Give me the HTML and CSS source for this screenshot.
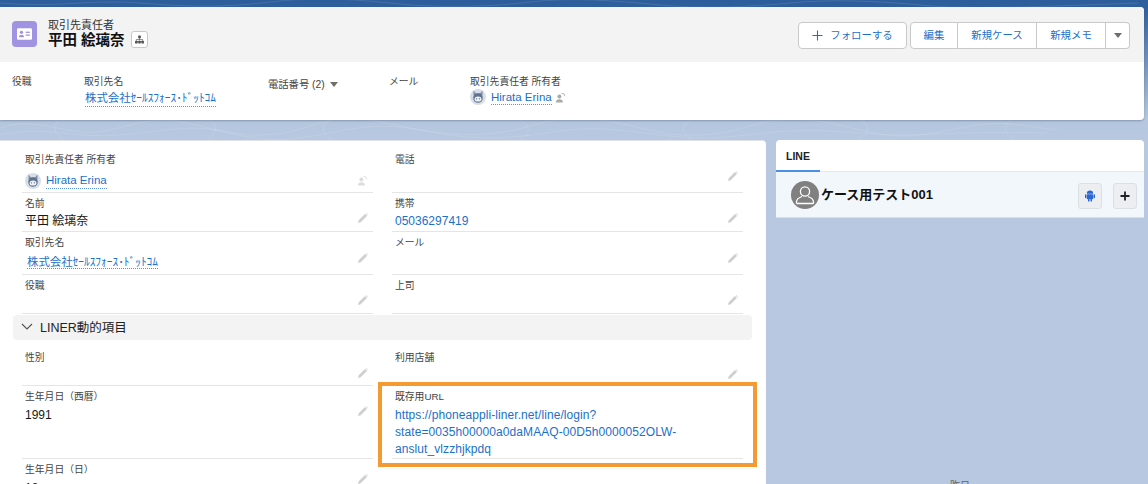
FILE: index.html
```html
<!DOCTYPE html>
<html lang="ja">
<head>
<meta charset="utf-8">
<title>取引先責任者</title>
<link rel="stylesheet" href="styles.css">
</head>
<body>
<svg class="topo" width="1148" height="484" viewBox="0 0 1148 484" aria-hidden="true">
  <g fill="none" stroke="#fff" stroke-opacity=".16" stroke-width=".7">
    <path d="M0 128c40-14 70 12 110 2s50-14 90-4 70 14 110 0 60-6 100 2 80 10 120-2 70-8 110 2 70 10 110-2 70-6 110 4 60 6 100-2 50-4 98 2"/>
    <path d="M0 135c50-10 70 4 120 0s70-12 110-2 60 8 110-2 70-2 110 4 70 2 110-4 80 2 120 6 70-4 110-6 80 4 110 4 70-4 148-2"/>
    <path d="M60 120c-8 6-6 14 4 20M210 120c10 8 4 14-2 20M330 120c-10 6-8 14 2 20M520 120c12 6 10 14 0 20M690 120c-12 8-6 14 2 20M860 120c12 6 8 14-2 20M1010 120c-8 8-4 14 4 20"/>
    <path d="M0 3c60 5 90-4 140 0s80 5 130-1 90-2 130 2 90 3 130-2 90-1 130 3 90 2 130-2 90-2 130 2 90 3 218-2"/>
  </g>
</svg>
<main class="page">
  <header class="record">
    <div class="highlights">
      <div class="identity">
        <span class="entity-icon">
          <svg width="18" height="14" viewBox="0 0 18 14"><rect width="18" height="14" rx="1.6" fill="#fff"/><circle cx="5.4" cy="5" r="2" fill="#9f93e2"/><path d="M2.4 11c0-2.2 1.2-3 3-3s3 .8 3 3z" fill="#9f93e2"/><rect x="10.4" y="4.2" width="5" height="1.5" fill="#9f93e2"/><rect x="10.4" y="7.6" width="5" height="1.5" fill="#9f93e2"/></svg>
        </span>
        <div class="titles">
          <div class="object-name">取引先責任者</div>
          <div class="record-name">平田 絵璃奈</div>
        </div>
        <span class="hier-btn">
          <svg width="10" height="10" viewBox="0 0 10 10"><g fill="#555"><rect x="3.500" y="0.500" width="3" height="3" rx=".5"/><rect x="0" y="6.500" width="3" height="3" rx=".5"/><rect x="7" y="6.500" width="3" height="3" rx=".5"/><rect x="3.500" y="6.500" width="3" height="3" rx=".5"/></g><path d="M5 3v3M1.500 6.500V5h7v1.500" fill="none" stroke="#555" stroke-width=".7"/></svg>
        </span>
      </div>
      <div class="actions">
        <button class="btn follow"><svg width="11" height="11" viewBox="0 0 12 12"><path d="M6 .5v11M.5 6h11" stroke="#1b70c9" stroke-width="1.200"/></svg>フォローする</button>
        <div class="btn-group">
          <button class="btn seg edit">編集</button>
          <button class="btn seg case">新規ケース</button>
          <button class="btn seg memo">新規メモ</button>
          <button class="btn seg more"><span class="caret"></span></button>
        </div>
      </div>
    </div>
    <div class="summary">
      <div class="sum s1"><div class="sum-label">役職</div></div>
      <div class="sum s2"><div class="sum-label">取引先名</div><a class="link dotted">株式会社ｾｰﾙｽﾌｫｰｽ･ﾄﾞｯﾄｺﾑ</a></div>
      <div class="sum s3"><div class="sum-label phone">電話番号 (2)<span class="caret"></span></div></div>
      <div class="sum s4"><div class="sum-label">メール</div></div>
      <div class="sum s5"><div class="sum-label">取引先責任者 所有者</div>
        <div class="owner">
          <svg class="avatar" width="16" height="16" viewBox="0 0 16 16"><circle cx="8" cy="8" r="8" fill="#d8dee8"/><path d="M3.500 1.500l2.500 3h4l2.500-3v5h-9z" fill="#7d90a8"/><circle cx="8" cy="9" r="4.800" fill="#5f7390"/><ellipse cx="8" cy="10" rx="3.500" ry="2.600" fill="#eef1f5"/><circle cx="6.600" cy="9.800" r=".6" fill="#4a5a70"/><circle cx="9.400" cy="9.800" r=".6" fill="#4a5a70"/></svg>
          <a class="link dotted">Hirata Erina</a>
          <svg class="change" viewBox="0 0 10 10"><circle cx="4" cy="4" r="1.800" fill="#aaa"/><path d="M0.800 9.500c0-2.300 1.300-3 3.200-3s3.200.7 3.200 3z" fill="#aaa"/><path d="M6 1.200a2.800 2.800 0 0 1 3 2.600" fill="none" stroke="#aaa" stroke-width=".8"/></svg>
        </div>
      </div>
    </div>
  </header>

  <div class="columns">
    <section class="detail">
      <div class="grid top-grid">
        <div class="field h42 p11"><div class="label">取引先責任者 所有者</div>
          <div class="value owner owner-row">
            <svg class="avatar" width="16" height="16" viewBox="0 0 16 16"><circle cx="8" cy="8" r="8" fill="#d8dee8"/><path d="M3.500 1.500l2.500 3h4l2.500-3v5h-9z" fill="#7d90a8"/><circle cx="8" cy="9" r="4.800" fill="#5f7390"/><ellipse cx="8" cy="10" rx="3.500" ry="2.600" fill="#eef1f5"/><circle cx="6.600" cy="9.800" r=".6" fill="#4a5a70"/><circle cx="9.400" cy="9.800" r=".6" fill="#4a5a70"/></svg>
            <a class="link dotted">Hirata Erina</a>
          </div>
          <svg class="pencil faint" viewBox="0 0 10 10"><circle cx="4" cy="4" r="1.800" fill="#ddd"/><path d="M0.800 9.500c0-2.300 1.300-3 3.200-3s3.200.7 3.200 3z" fill="#ddd"/><path d="M6 1.200a2.800 2.800 0 0 1 3 2.600" fill="none" stroke="#ddd" stroke-width=".8"/></svg>
        </div>
        <div class="field h42 p11"><div class="label">電話</div><svg class="pencil" viewBox="0 0 10 10"><path d="M0 10l.7-2.700L7 1l2 2-6.300 6.300zM7.600.4l.5-.4 1.900 1.900-.4.500z"/></svg></div>
        <div class="field h39 p8"><div class="label">名前</div><div class="value v1">平田 絵璃奈</div><svg class="pencil" viewBox="0 0 10 10"><path d="M0 10l.7-2.700L7 1l2 2-6.300 6.300zM7.600.4l.5-.4 1.900 1.900-.4.500z"/></svg></div>
        <div class="field h39 p8"><div class="label">携帯</div><div class="value v1"><a class="link">05036297419</a></div><svg class="pencil" viewBox="0 0 10 10"><path d="M0 10l.7-2.700L7 1l2 2-6.300 6.300zM7.600.4l.5-.4 1.900 1.900-.4.500z"/></svg></div>
        <div class="field h43 p11"><div class="label">取引先名</div><div class="value acct"><a class="link dotted">株式会社ｾｰﾙｽﾌｫｰｽ･ﾄﾞｯﾄｺﾑ</a></div><svg class="pencil" viewBox="0 0 10 10"><path d="M0 10l.7-2.700L7 1l2 2-6.300 6.300zM7.600.4l.5-.4 1.900 1.900-.4.500z"/></svg></div>
        <div class="field h43 p11"><div class="label">メール</div><svg class="pencil" viewBox="0 0 10 10"><path d="M0 10l.7-2.700L7 1l2 2-6.300 6.300zM7.600.4l.5-.4 1.900 1.900-.4.500z"/></svg></div>
        <div class="field h39 p8"><div class="label">役職</div><svg class="pencil" viewBox="0 0 10 10"><path d="M0 10l.7-2.700L7 1l2 2-6.300 6.300zM7.600.4l.5-.4 1.900 1.900-.4.500z"/></svg></div>
        <div class="field h39 p8"><div class="label">上司</div><svg class="pencil" viewBox="0 0 10 10"><path d="M0 10l.7-2.700L7 1l2 2-6.300 6.300zM7.600.4l.5-.4 1.900 1.900-.4.500z"/></svg></div>
      </div>
      <div class="section-head">
        <svg width="12" height="7" viewBox="0 0 12 7"><path d="M1 1l5 5 5-5" fill="none" stroke="#555" stroke-width="1.100"/></svg>
        <span>LINER動的項目</span>
      </div>
      <div class="grid lower-grid">
        <div class="field h46 first p7"><div class="label">性別</div><svg class="pencil" viewBox="0 0 10 10"><path d="M0 10l.7-2.700L7 1l2 2-6.300 6.300zM7.600.4l.5-.4 1.900 1.900-.4.500z"/></svg></div>
        <div class="field h46 first p7 noline"><div class="label">利用店舗</div><svg class="pencil" viewBox="0 0 10 10"><path d="M0 10l.7-2.700L7 1l2 2-6.300 6.300zM7.600.4l.5-.4 1.900 1.900-.4.500z"/></svg></div>
        <div class="field h73 p42"><div class="label">生年月日（西暦）</div><div class="value">1991</div><svg class="pencil" viewBox="0 0 10 10"><path d="M0 10l.7-2.700L7 1l2 2-6.300 6.300zM7.600.4l.5-.4 1.900 1.900-.4.500z"/></svg></div>
        <div class="field h73 url-field"><div class="label">既存用URL</div><div class="value url"><a class="link">https://phoneappli-liner.net/line/login?<br>state=0035h00000a0daMAAQ-00D5h0000052OLW-<br>anslut_vlzzhjkpdq</a></div><span class="highlight-box"></span></div>
        <div class="field h46 noline p21"><div class="label">生年月日（日）</div><div class="value">18</div><svg class="pencil" viewBox="0 0 10 10"><path d="M0 10l.7-2.700L7 1l2 2-6.300 6.300zM7.600.4l.5-.4 1.900 1.900-.4.500z"/></svg></div>
      </div>
    </section>

    <aside class="side">
      <div class="tabs"><span class="tab">LINE</span></div>
      <div class="chat-head">
        <span class="chat-avatar"><svg width="28" height="28" viewBox="0 0 28 28"><circle cx="14" cy="14" r="14" fill="#808080"/><circle cx="14" cy="10.500" r="4.600" fill="none" stroke="#fff" stroke-width="1.300"/><path d="M5.500 22.500v-1.500c0-3.500 4-5 5.500-5.500M22.500 22.500v-1.500c0-3.500-4-5-5.500-5.500M5.500 22.500h17" fill="none" stroke="#fff" stroke-width="1.300"/></svg></span>
        <span class="chat-name">ケース用テスト001</span>
        <span class="chat-btn robot"><svg width="10" height="12" viewBox="0 0 10 12"><g fill="#2a66d4"><path d="M1.800 3.800a3.200 3.200 0 0 1 6.400 0z"/><rect x="1.800" y="4.200" width="6.400" height="5" rx=".7"/><rect x="0" y="4.200" width="1.400" height="4" rx=".7"/><rect x="8.600" y="4.200" width="1.400" height="4" rx=".7"/><rect x="3" y="9" width="1.500" height="2.600" rx=".6"/><rect x="5.500" y="9" width="1.500" height="2.600" rx=".6"/></g></svg></span>
        <span class="chat-btn plus"><svg width="10" height="10" viewBox="0 0 10 10"><path d="M5 .5v9M.5 5h9" stroke="#222" stroke-width="1.800"/></svg></span>
      </div>
      <div class="chat-body"><span class="day">昨日</span></div>
    </aside>
  </div>
</main>
</body>
</html>
```
FILE: styles.css
```css
* { box-sizing: border-box; }
html, body { margin: 0; height: 484px; overflow: hidden; }
body {
  position: relative;
  width: 1148px;
  background: linear-gradient(#2c5e9b 0, #2f609d 8px, #6f90bc 60px, #b4c6de 118px, #b7c8e0 140px);
  font-family: "Liberation Sans", "Noto Sans CJK JP", sans-serif;
  color: #181818;
}
.topo { position: absolute; left: 0; top: 0; }
.page { position: relative; padding-top: 7px; }
.record {
  width: 1144px;
  height: 113px;
  border-radius: 0 4px 4px 0;
  overflow: hidden;
  background: #fff;
  box-shadow: 0 1px 2px rgba(60, 80, 110, .4);
}
.highlights {
  height: 55px;
  background: #f3f3f3;
  display: flex;
  justify-content: space-between;
  padding: 15px 14px 0 12px;
}
.identity { display: flex; align-items: flex-start; }
.entity-icon {
  width: 25px; height: 26px;
  margin-top: -1px;
  border-radius: 4px;
  background: #9f93e2;
  display: flex; align-items: center; justify-content: center;
}
.entity-icon svg { width: 15px; height: 12px; }
.titles { margin-left: 11px; margin-top: -3px; }
.object-name { font-size: 11px; line-height: 13px; color: #333; }
.record-name { font-size: 14.5px; line-height: 17px; font-weight: 700; color: #111; }
.hier-btn {
  width: 17px; height: 17px;
  margin: 9px 0 0 6px;
  background: #fff;
  border: 1px solid #c9c9c9;
  border-radius: 3px;
  display: flex; align-items: center; justify-content: center;
}
.hier-btn svg { width: 9px; height: 9px; }
.actions { display: flex; gap: 3px; height: 27px; }
.btn {
  height: 27px; padding: 0;
  font: 10.4px/25px "Liberation Sans", "Noto Sans CJK JP", sans-serif;
  color: #1b70c9;
  background: #fff;
  border: 1px solid #c9c9c9;
  display: flex; align-items: center; justify-content: center;
}
.follow { width: 109px; border-radius: 4px; gap: 7px; }
.btn-group { display: flex; }
.seg { border-left-width: 0; }
.edit { width: 48px; border-left-width: 1px; border-radius: 4px 0 0 4px; }
.case { width: 79px; }
.memo { width: 69px; }
.more { width: 24px; border-radius: 0 4px 4px 0; }
.caret {
  display: inline-block;
  width: 0; height: 0;
  border-left: 4.500px solid transparent;
  border-right: 4.500px solid transparent;
  border-top: 5.500px solid #706e6b;
}
.summary { position: relative; height: 58px; display: flex; padding: 13px 0 0 12px; }
.sum-label { font-size: 9.8px; line-height: 13px; color: #444; white-space: nowrap; }
.s1 { width: 72px; }
.s2 { width: 184px; }
.s3 { width: 121px; padding-top: 3px; }
.s4 { width: 81px; }
.phone { display: flex; align-items: center; gap: 5px; font-size: 10.3px; }
.link { color: #1b70c9; text-decoration: none; }
.dotted { border-bottom: 1px dotted #5b93d8; }
.s2 .link { display: inline-block; margin: 1px 0 0 1px; font-size: 11.400px; line-height: 16px; white-space: nowrap; }
.owner { display: flex; align-items: center; }
.s5 .owner { margin-top: 1px; height: 16px; }
.s5 .avatar { margin-right: 5px; }
.s5 .link { font-size: 11.500px; line-height: 14px; }
.change { margin-left: 3px; width: 11px; height: 11px; }

.columns { display: flex; gap: 10px; margin-top: 20px; }
.detail {
  width: 766px; height: 344px;
  background: #fff;
  border-radius: 0 4px 0 0;
  border-top: 1px solid #dfe3e8;
  padding: 9px 0 0 22px;
  overflow: hidden;
}
.grid { display: grid; grid-template-columns: 351px 351px; column-gap: 19px; }
.field { position: relative; padding: 0 3px; border-bottom: 1px solid #e5e5e5; }
.noline { border-bottom: 0; }
.h42 { height: 43px; }
.h39 { height: 39px; }
.h43 { height: 43px; }
.h46 { height: 46px; }
.h73 { height: 73px; }
.label { font-size: 9.800px; line-height: 14px; color: #444; padding-top: 4px; height: 19px; }
.value { font-size: 12px; line-height: 16px; color: #181818; margin-top: 2px; }
.top-grid .h42 .label { padding-top: 3px; height: 18px; }
.first .label { padding-top: 11px; height: 26px; }
.owner-row { margin-top: 4px; font-size: 11.500px; }
.owner-row .avatar { margin-right: 5px; }
.v1 { margin-top: 1px; }
.acct { margin-top: 3px; padding-left: 2px; font-size: 11.400px; }
.pencil { position: absolute; right: 5px; width: 10px; height: 10px; fill: #cfcfcf; }
.p11 .pencil { bottom: 11px; }
.p8 .pencil { bottom: 8px; }
.p7 .pencil { bottom: 7px; }
.p42 .pencil { bottom: 42px; }
.p21 .pencil { bottom: 21px; }
.p11 .pencil.faint { bottom: 6px; width: 11px; height: 11px; }
.section-head {
  width: 739px; height: 25px;
  margin: 1px 0 0 -9px;
  padding: 0 0 2px 8px;
  border-radius: 4px;
  background: #f3f3f3;
  display: flex; align-items: center; gap: 7px;
  font-size: 12.500px; color: #222;
}
.url { line-height: 17px; letter-spacing: .08px; }
.highlight-box {
  position: absolute;
  left: -14px; top: -4px;
  width: 379px; height: 85px;
  border: 4px solid #f39a33;
  pointer-events: none;
}

.side { width: 368px; height: 344px; display: flex; flex-direction: column; border-radius: 4px 4px 0 0; overflow: hidden; }
.tabs { height: 32px; flex: none; background: #fff; border-bottom: 1px solid #e4e8ee; display: flex; }
.tab {
  width: 44px; height: 32px;
  padding: 10px 0 0 10px;
  font-size: 10.500px; line-height: 13px; font-weight: 700; color: #222;
  border-bottom: 2px solid #4b8fe8;
}
.chat-head {
  height: 46px; flex: none;
  background: #f2f7fc;
  border-bottom: 1px solid #d9dfe7;
  display: flex; align-items: center;
  padding: 0 7px 0 15px;
}
.chat-avatar { display: flex; }
.chat-name { font-size: 13px; font-weight: 700; color: #111; margin-left: 2px; flex: 1; margin-top: -2px; }
.chat-btn {
  width: 24px; height: 26px;
  background: #eceef2;
  border: 1px solid #dcdfe4;
  border-radius: 3px;
  display: flex; align-items: center; justify-content: center;
  margin-top: 2px;
}
.robot { margin-right: 11px; }
.chat-body { flex: 1 1 0; min-height: 0; background: #b7c8e0; display: flex; justify-content: center; }
.day { font-size: 10px; line-height: 14px; color: #666; padding-top: 261px; }
```
